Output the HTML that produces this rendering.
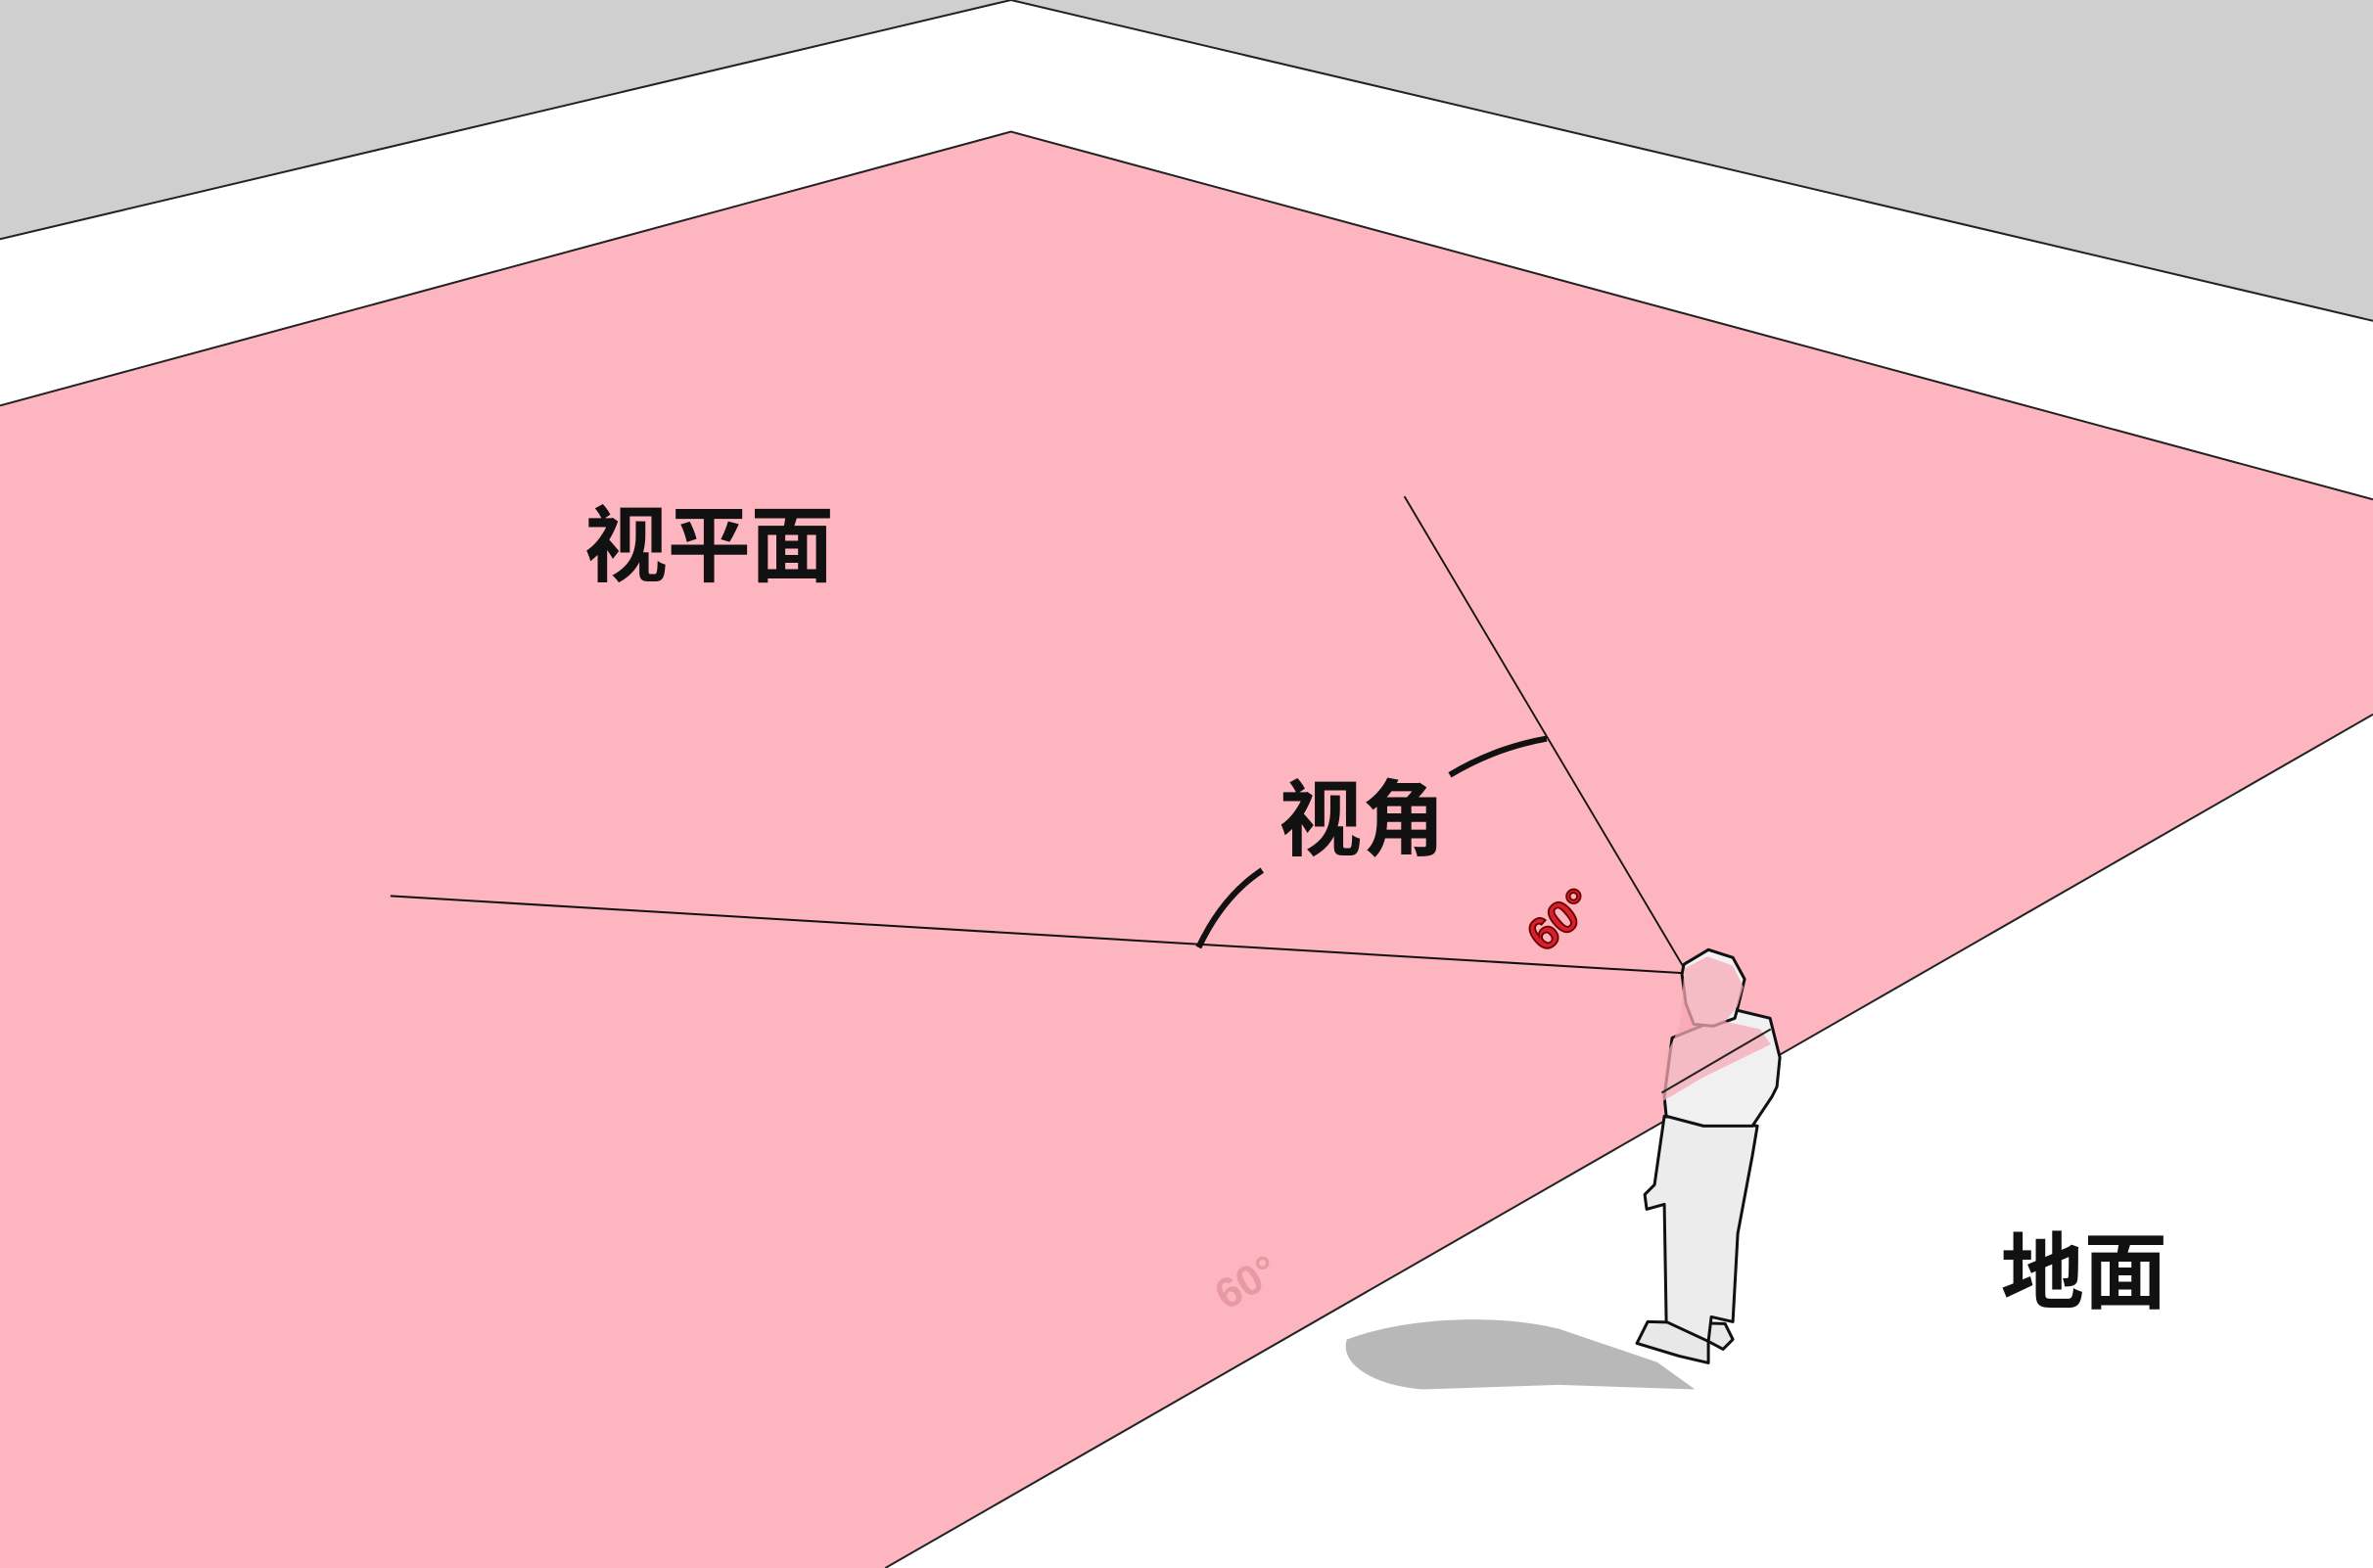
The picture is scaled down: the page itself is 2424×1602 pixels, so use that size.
<!DOCTYPE html>
<html><head><meta charset="utf-8"><style>
html,body{margin:0;padding:0;width:2424px;height:1602px;overflow:hidden;background:#fff}
svg{display:block}
text{font-family:"Liberation Sans","Noto Sans CJK SC",sans-serif;font-weight:bold}
</style></head><body>
<svg width="2424" height="1602" viewBox="0 0 1568 1036" preserveAspectRatio="none" xmlns="http://www.w3.org/2000/svg">
<rect width="1568" height="1036" fill="#fff"/>
<polygon points="0,0 1568,0 1568,212 668,0 0,158" fill="#cfcfcf"/>
<polyline points="0,158 668,0 1568,212" fill="none" stroke="#222" stroke-width="1.3"/>
<polygon points="0,268 668,87 1568,330 1568,472 585,1036 0,1036" fill="#fdb5c0"/>
<polyline points="0,268 668,87 1568,330" fill="none" stroke="#222" stroke-width="1.3"/>
<line x1="1568" y1="472" x2="585" y2="1036" stroke="#222" stroke-width="1.3"/>
<path d="M890,885 C930,870 990,868 1030,878 L1095,900 L1120,918 L1030,915 L940,918 C905,915 885,900 890,885Z" fill="#b8b8b8"/>
<line x1="928" y1="328" x2="1113" y2="640" stroke="#111" stroke-width="1.2"/>
<line x1="258" y1="592" x2="1113" y2="643" stroke="#111" stroke-width="1.3"/>
<path d="M792,626 Q808,592 834,575" fill="none" stroke="#111" stroke-width="4"/>
<path d="M958,512 Q988,494 1022,488" fill="none" stroke="#111" stroke-width="4"/>
<g transform="scale(0.6469)" stroke="#111" stroke-width="3" stroke-linejoin="round">
<path d="M1683,1350 L1672,1372 L1715,1385 L1745,1392 L1745,1370 L1760,1378 L1770,1368 L1762,1352 Z" fill="#e8e8e8"/>
<path d="M1700,1140 L1690,1210 L1680,1220 L1682,1235 L1700,1230 L1702,1350 L1745,1370 L1748,1345 L1770,1350 L1775,1260 L1790,1180 L1795,1150 Z" fill="#ececec"/>
<path d="M1708,1060 L1700,1120 L1702,1140 L1740,1150 L1790,1150 L1810,1120 L1815,1110 L1818,1080 L1808,1040 L1775,1032 L1745,1045 Z" fill="#f0f0f0"/>
<path d="M1718,995 L1720,985 L1745,970 L1770,978 L1782,1000 L1776,1025 L1772,1040 L1750,1048 L1730,1046 L1722,1025 Z" fill="#f2f2f2"/>
</g>
<path d="M1113,640 L1128,632 L1145,638 L1152,652 L1148,665 L1140,675 L1163,680 L1170,690 L1125,712 L1098,728 L1102,695 L1110,678 Z" fill="#f7a9b6" opacity="0.75"/>
<line x1="1170" y1="680" x2="1098" y2="722" stroke="#222" stroke-width="1.3"/>
<text x="386" y="380" font-size="55" fill="#111">视平面</text>
<text x="845" y="561" font-size="55" fill="#111">视角</text>
<text x="1322" y="860" font-size="55" fill="#111">地面</text>
<text x="0" y="0" font-size="30" fill="#d8202c" stroke="#6a0000" stroke-width="1.2" transform="translate(1020,630) rotate(-40)">60°</text>
<text x="0" y="0" font-size="28" fill="#e89aa4" transform="translate(810,866) rotate(-30)">60°</text>
</svg>
</body></html>
